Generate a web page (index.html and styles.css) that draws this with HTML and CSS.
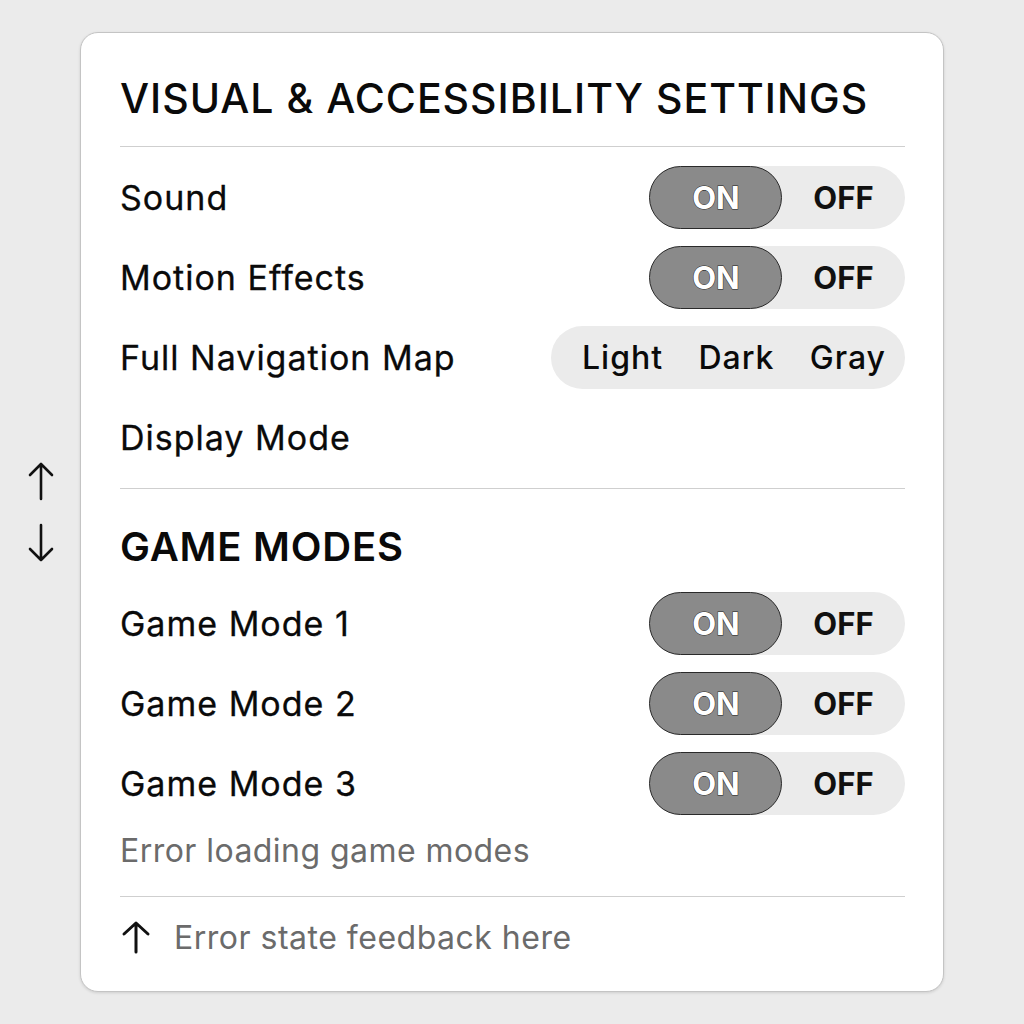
FILE: index.html
```html
<!DOCTYPE html>
<html lang="en">
<head>
<meta charset="utf-8">
<title>Visual &amp; Accessibility Settings</title>
<link rel="stylesheet" href="styles.css">
</head>
<body>
<div class="page">
  <div class="side-arrows">
    <svg class="side-arrow" width="26" height="40" viewBox="0 0 26 40"><path d="M13 38V3M2 14L13 3L24 14" fill="none" stroke="#111" stroke-width="2.6" stroke-linecap="round" stroke-linejoin="round"/></svg>
    <svg class="side-arrow" width="26" height="40" viewBox="0 0 26 40"><path d="M13 2V37M2 26L13 37L24 26" fill="none" stroke="#111" stroke-width="2.6" stroke-linecap="round" stroke-linejoin="round"/></svg>
  </div>
  <div class="card">
    <h1 class="title">VISUAL &amp; ACCESSIBILITY SETTINGS</h1>
    <div class="divider"></div>
    <div class="rows first-rows">
      <div class="row">
        <span class="label">Sound</span>
        <div class="toggle"><span class="on">ON</span><span class="off">OFF</span></div>
      </div>
      <div class="row">
        <span class="label">Motion Effects</span>
        <div class="toggle"><span class="on">ON</span><span class="off">OFF</span></div>
      </div>
      <div class="row">
        <span class="label">Full Navigation Map</span>
        <div class="segmented"><span>Light</span><span>Dark</span><span>Gray</span></div>
      </div>
      <div class="row">
        <span class="label">Display Mode</span>
      </div>
    </div>
    <div class="divider divider-2"></div>
    <h2 class="section">GAME MODES</h2>
    <div class="rows">
      <div class="row">
        <span class="label">Game Mode 1</span>
        <div class="toggle"><span class="on">ON</span><span class="off">OFF</span></div>
      </div>
      <div class="row">
        <span class="label">Game Mode 2</span>
        <div class="toggle"><span class="on">ON</span><span class="off">OFF</span></div>
      </div>
      <div class="row">
        <span class="label">Game Mode 3</span>
        <div class="toggle"><span class="on">ON</span><span class="off">OFF</span></div>
      </div>
    </div>
    <p class="error">Error loading game modes</p>
    <div class="divider divider-3"></div>
    <div class="feedback">
      <svg class="feedback-arrow" width="30" height="34" viewBox="0 0 30 34"><path d="M15 32V3M3 14L15 3L27 14" fill="none" stroke="#111" stroke-width="3" stroke-linecap="round" stroke-linejoin="round"/></svg>
      <span>Error state feedback here</span>
    </div>
  </div>
</div>
</body>
</html>
```

FILE: styles.css
```css
* { box-sizing: border-box; }
html, body {
  margin: 0;
  padding: 0;
  background: #ebebeb;
  font-family: Inter, "Noto Sans", "Liberation Sans", sans-serif;
  color: #0a0a0a;
}
.page {
  position: relative;
  width: 1024px;
  height: 1024px;
  padding-top: 32px;
}
.side-arrows {
  position: absolute;
  left: 28px;
  top: 461px;
  display: flex;
  flex-direction: column;
  gap: 22px;
}
.card {
  width: 864px;
  height: 960px;
  margin: 0 auto;
  background: #fff;
  border: 1px solid #c4c4c4;
  border-radius: 18px;
  box-shadow: 0 1px 3px rgba(0,0,0,0.12);
  padding: 40px 38px 0 39px;
  display: flex;
  flex-direction: column;
}
.title {
  margin: 0;
  font-size: 41px;
  font-weight: 500;
  line-height: 50px;
  letter-spacing: 1px;
}
.divider {
  height: 1px;
  background: #cfcfcf;
  margin-top: 23px;
}
.rows { display: flex; flex-direction: column; }
.first-rows { margin-top: 10px; }
.row {
  height: 80px;
  display: flex;
  align-items: center;
  justify-content: space-between;
}
.label {
  font-size: 34px;
  font-weight: 400;
  letter-spacing: 1px;
  -webkit-text-stroke: 0.3px #0a0a0a;
}
.toggle {
  width: 256px;
  height: 63px;
  border-radius: 32px;
  background: #ebebeb;
  display: flex;
  align-items: center;
}
.toggle .on {
  width: 133px;
  height: 63px;
  border-radius: 32px;
  background: #8a8a8a;
  border: 1.5px solid #2a2a2a;
  display: flex;
  align-items: center;
  justify-content: center;
  color: #fff;
  font-size: 31px;
  font-weight: 700;
  -webkit-text-stroke: 1px #222;
  paint-order: stroke fill;
  padding-left: 1px;
}
.toggle .off {
  flex: 1;
  text-align: center;
  font-size: 31px;
  font-weight: 700;
  color: #111;
}
.segmented {
  width: 354px;
  height: 63px;
  border-radius: 32px;
  background: #ebebeb;
  display: flex;
  align-items: center;
  justify-content: space-between;
  padding: 0 19px 0 31px;
  font-size: 32px;
  font-weight: 500;
  letter-spacing: 1px;
}
.divider-2 { margin-top: 11px; }
.section {
  margin: 33px 0 0;
  font-size: 40px;
  font-weight: 600;
  line-height: 50px;
  letter-spacing: 0.8px;
}
.section + .rows { margin-top: 11px; }
.error {
  margin: 8px 0 0;
  font-size: 32px;
  line-height: 40px;
  color: #6b6b6b;
  letter-spacing: 0.45px;
}
.divider-3 { margin-top: 25px; }
.feedback {
  margin-top: 20px;
  height: 40px;
  display: flex;
  align-items: center;
  gap: 23px;
  font-size: 32px;
  color: #6b6b6b;
  letter-spacing: 0.5px;
}
.feedback-arrow { margin-left: 1px; }
```
